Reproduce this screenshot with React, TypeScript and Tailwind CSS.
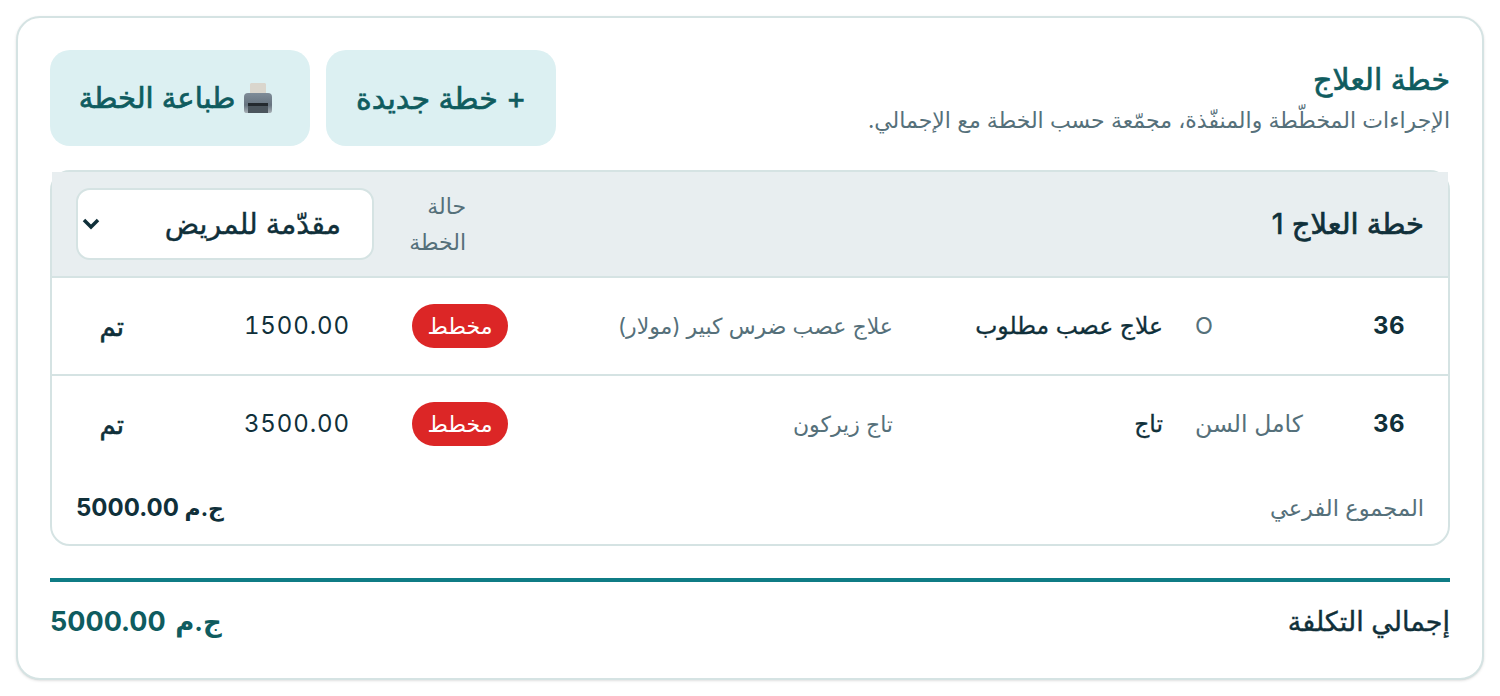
const font = "font-['Inter','Noto_Sans','DejaVu_Sans',sans-serif]";

type Row = { tooth: string; surface: string; name: string; detail: string; price: string };

const rows: Row[] = [
  { tooth: "36", surface: "O", name: "علاج عصب مطلوب", detail: "علاج عصب ضرس كبير (مولار)", price: "1500.00" },
  { tooth: "36", surface: "كامل السن", name: "تاج", detail: "تاج زيركون", price: "3500.00" },
];

function PrinterIcon() {
  return (
    <svg className="shrink-0" width="32" height="32" viewBox="0 0 32 32" aria-hidden="true">
      <defs>
        <linearGradient id="printerBody" x1="0" y1="0" x2="0" y2="1">
          <stop offset="0" stopColor="#7f8c98" />
          <stop offset="0.6" stopColor="#66737f" />
          <stop offset="1" stopColor="#a7afb5" />
        </linearGradient>
      </defs>
      <path d="M8 1h14l1 1v10H7V2z" fill="#dad6cd" />
      <path d="M1 15q0-4 4-4h20q4 0 4 4v13q0 3-2 3H3q-2 0-2-3z" fill="url(#printerBody)" />
      <rect x="5" y="22" width="20" height="9" fill="#4b555d" />
      <rect x="5" y="21" width="20" height="3" fill="#23292e" />
    </svg>
  );
}

function PlanRow({ row, last }: { row: Row; last?: boolean }) {
  return (
    <div
      className={`grid grid-cols-[130px_139px_270px_385px_159px_225px_88px] items-center ${
        last ? "h-[96px]" : "h-[98px] border-b-2 border-[#d5e3e3]"
      }`}
    >
      <div className="pr-[43px] text-[24px] font-bold tracking-[0.5px] text-[#10303a]">{row.tooth}</div>
      <div className="pl-4 text-left text-[23.5px] text-[#55707a]">{row.surface}</div>
      <div className="pr-4 text-[23.5px] text-[#10303a] [-webkit-text-stroke:0.3px_#10303a]">{row.name}</div>
      <div className="pr-4 text-[22px] text-[#55707a]">{row.detail}</div>
      <div className="pr-4">
        <span className="inline-flex h-11 w-24 items-center justify-center rounded-full bg-[#dc2626] text-[22px] font-medium text-white">
          مخطط
        </span>
      </div>
      <div className="pr-[15px] text-[24px] tracking-[0.9px] text-[#10303a] tabular-nums">{row.price}</div>
      <div className="pr-4 text-[26px] text-[#10303a] [-webkit-text-stroke:0.6px_#10303a]">تم</div>
    </div>
  );
}

export default function App() {
  return (
    <div dir="rtl" className={`${font} h-[696px] bg-white p-4 text-[#10303a]`}>
      <div className="h-[664px] rounded-[24px] border-2 border-[#d5e3e3] bg-white px-8 pt-8 shadow-sm">
        <header className="flex items-center justify-between">
          <div>
            <h2 className="text-[30px] leading-[36px] text-[#0f5c5f] [-webkit-text-stroke:0.7px_#0f5c5f]">خطة العلاج</h2>
            <p className="mt-2 text-[22px] leading-[30px] text-[#55707a]">
              الإجراءات المخطّطة والمنفّذة، مجمّعة حسب الخطة مع الإجمالي.
            </p>
          </div>
          <div className="flex gap-4">
            <button className="h-24 w-[230px] rounded-[20px] bg-[#dcf0f2] text-[30px] text-[#0f5c5f] [-webkit-text-stroke:0.7px_#0f5c5f]">
              + خطة جديدة
            </button>
            <button className="flex h-24 w-[260px] items-center justify-center gap-2 rounded-[20px] bg-[#dcf0f2] pr-[6px] text-[29px] text-[#0f5c5f] [-webkit-text-stroke:0.7px_#0f5c5f]">
              <PrinterIcon />
              طباعة الخطة
            </button>
          </div>
        </header>

        <section className="mt-6 h-[376px] rounded-[20px] border-2 border-[#d5e3e3]">
          <div className="flex h-[106px] items-center justify-between border-b-2 border-[#d5e3e3] bg-[#e8eef0] pr-6 pl-6">
            <h3 className="text-[29px] text-[#10303a] [-webkit-text-stroke:0.7px_#10303a]">خطة العلاج 1</h3>
            <div className="flex items-center gap-8">
              <span className="w-[60px] text-[22px] leading-[36px] text-[#55707a]">حالة الخطة</span>
              <div className="relative">
                <select className="h-[72px] w-[298px] appearance-none rounded-[14px] border-2 border-[#d5e3e3] bg-white pr-[31px] text-[28.5px] text-[#10303a] [-webkit-text-stroke:0.4px_#10303a]">
                  <option>مقدّمة للمريض</option>
                </select>
                <svg
                  className="pointer-events-none absolute top-[29px] left-[6px]"
                  width="18"
                  height="14"
                  viewBox="0 0 18 14"
                  fill="none"
                  stroke="#10303a"
                  strokeWidth="3.5"
                  aria-hidden="true"
                >
                  <path d="M2 3l7 7 7-7" />
                </svg>
              </div>
            </div>
          </div>

          <PlanRow row={rows[0]} />
          <PlanRow row={rows[1]} last />

          <div className="flex items-center justify-between px-6 pt-[18px]">
            <span className="text-[22.5px] text-[#55707a]">المجموع الفرعي</span>
            <span className="text-[24px] font-bold text-[#10303a]">
              <span className="text-[22px]">ج.م</span> 5000.00
            </span>
          </div>
        </section>

        <div className="mt-8 flex h-[84px] items-center justify-between border-t-4 border-[#0f7c85]">
          <span className="text-[27px] text-[#10303a] [-webkit-text-stroke:0.4px_#10303a]">إجمالي التكلفة</span>
          <span className="text-[27px] font-bold text-[#0f5c5f]">
            <span className="ml-[3px] text-[26px]">ج.م</span> 5000.00
          </span>
        </div>
      </div>
    </div>
  );
}
